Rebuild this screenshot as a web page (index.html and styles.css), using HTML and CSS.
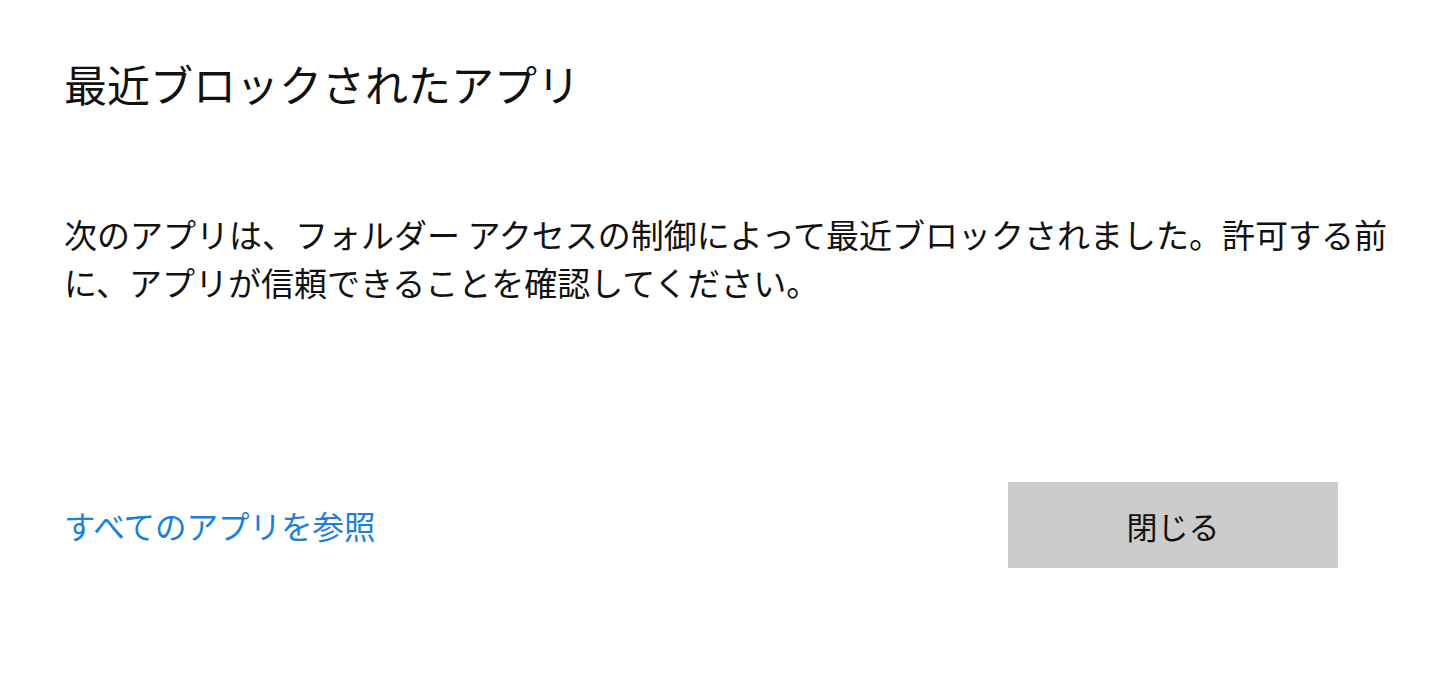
FILE: index.html
```html
<!DOCTYPE html>
<html lang="ja">
<head>
<meta charset="utf-8">
<title>最近ブロックされたアプリ</title>
<link rel="stylesheet" href="styles.css">
</head>
<body>
<div class="dialog">
  <h1 class="title">最近ブロックされたアプリ</h1>
  <p class="message">次のアプリは、フォルダー アクセスの制御によって最近ブロックされました。許可する前に、アプリが信頼できることを確認してください。</p>
  <div class="footer">
    <a class="link" href="#">すべてのアプリを参照</a>
    <button class="close-btn" type="button">閉じる</button>
  </div>
</div>
</body>
</html>
```
FILE: styles.css
```css
html, body {
  margin: 0;
  padding: 0;
  background: #ffffff;
}
body {
  font-family: "Noto Sans CJK JP", "Noto Sans", sans-serif;
  color: #000000;
}
.dialog {
  padding: 59px 118px 0 64px;
}
.title {
  margin: 0;
  font-size: 43px;
  font-weight: 400;
  line-height: 48px;
  color: #111111;
}
.message {
  margin: 103px 0 0 0;
  width: 1340px;
  font-size: 33px;
  line-height: 48px;
  color: #111111;
}
.footer {
  margin-top: 176px;
  display: flex;
  justify-content: space-between;
  align-items: center;
}
.link {
  font-size: 31.5px;
  line-height: 48px;
  color: #1a80d9;
  text-decoration: none;
}
.close-btn {
  width: 330px;
  height: 86px;
  border: none;
  background: #cccccc;
  font-family: "Noto Sans CJK JP", "Noto Sans", sans-serif;
  font-size: 31px;
  color: #111111;
  padding: 0;
}
```
